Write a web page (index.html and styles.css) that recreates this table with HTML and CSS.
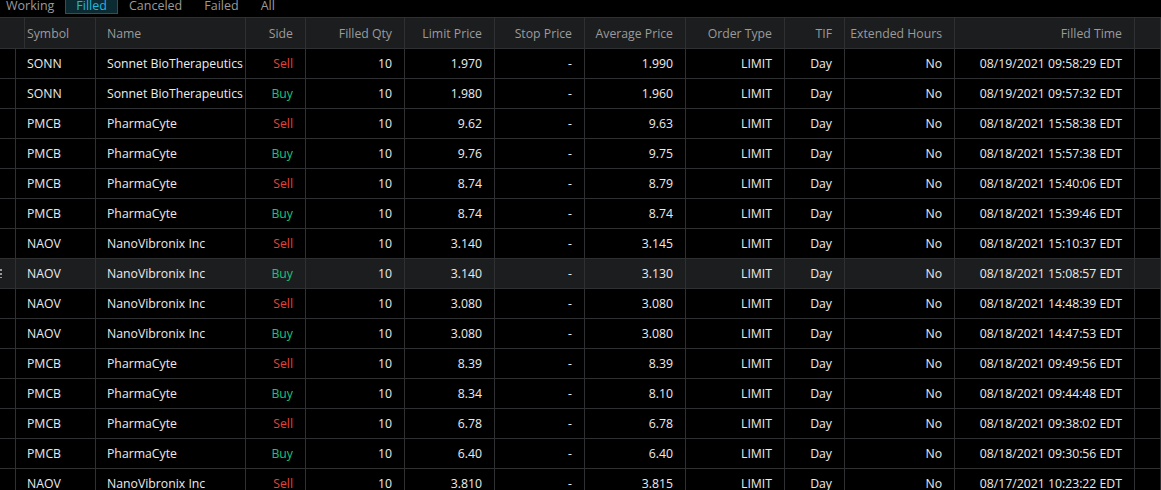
FILE: index.html
```html
<!DOCTYPE html>
<html>
<head>
<meta charset="utf-8">
<link rel="stylesheet" href="styles.css">
</head>
<body>
<div class="tabs">
  <div class="tab">Working</div>
  <div class="tab active">Filled</div>
  <div class="tab">Canceled</div>
  <div class="tab">Failed</div>
  <div class="tab">All</div>
</div>
<div class="grid" id="grid">
  <div class="row head">
    <div class="c"></div>
    <div class="c l">Symbol</div>
    <div class="c l">Name</div>
    <div class="c">Side</div>
    <div class="c">Filled Qty</div>
    <div class="c">Limit Price</div>
    <div class="c">Stop Price</div>
    <div class="c">Average Price</div>
    <div class="c">Order Type</div>
    <div class="c">TIF</div>
    <div class="c">Extended Hours</div>
    <div class="c">Filled Time</div>
    <div class="c"></div>
  </div>
</div>
<script src="app.js"></script>
</body>
</html>
```
FILE: styles.css
```css
html, body {
  margin: 0;
  padding: 0;
  background: #000;
  overflow: hidden;
}
body {
  font-family: "Open Sans", "Noto Sans", sans-serif;
  font-size: 12.25px;
  color: #ececec;
  width: 1161px;
  height: 490px;
}
.tabs {
  display: flex;
  height: 17px;
  align-items: flex-end;
  margin-left: -5px;
  overflow: visible;
}
.tab {
  box-sizing: border-box;
  height: 18px;
  margin-bottom: 3px;
  padding: 0 10px;
  border: 1px solid transparent;
  color: #9a9a9a;
  font-size: 12.5px;
  line-height: 17px;
}
.tab.active {
  background: #0b2a31;
  border-color: #1f5663;
  color: #1fb8e0;
}
.grid {
  border-top: 1px solid #2f3032;
}
.row {
  display: grid;
  grid-template-columns: 16px 80px 150px 60px 99px 90px 90px 101px 99px 60px 110px 180px 26px;
  height: 30px;
  box-sizing: border-box;
  border-bottom: 1px solid #2f3032;
}
.row.head {
  height: 31px;
  background: #1c1d1f;
  color: #9b9b9b;
}
.row.sel {
  background: #1c1d1f;
}
.c {
  box-sizing: border-box;
  border-right: 1px solid #2f3032;
  padding: 0 12px;
  display: flex;
  align-items: center;
  justify-content: flex-end;
  white-space: nowrap;
  overflow: hidden;
  position: relative;
}
.c.l {
  justify-content: flex-start;
  padding-left: 11px;
}
.c.first { padding: 0; }
.c.nm { padding-left: 11px; padding-right: 0; justify-content: flex-start; }
.sell { color: #e0443a; }
.buy { color: #16c47a; }
.handle {
  position: absolute;
  left: 0;
  top: 9px;
  width: 2px;
  height: 10px;
  background: radial-gradient(circle, #9a9a9a 0.8px, transparent 1px) 0 0 / 2px 4px;
}
```
FILE: app.js
```js
const data = [
  ["SONN","Sonnet BioTherapeutics","Sell","10","1.970","-","1.990","LIMIT","Day","No","08/19/2021 09:58:29 EDT"],
  ["SONN","Sonnet BioTherapeutics","Buy","10","1.980","-","1.960","LIMIT","Day","No","08/19/2021 09:57:32 EDT"],
  ["PMCB","PharmaCyte","Sell","10","9.62","-","9.63","LIMIT","Day","No","08/18/2021 15:58:38 EDT"],
  ["PMCB","PharmaCyte","Buy","10","9.76","-","9.75","LIMIT","Day","No","08/18/2021 15:57:38 EDT"],
  ["PMCB","PharmaCyte","Sell","10","8.74","-","8.79","LIMIT","Day","No","08/18/2021 15:40:06 EDT"],
  ["PMCB","PharmaCyte","Buy","10","8.74","-","8.74","LIMIT","Day","No","08/18/2021 15:39:46 EDT"],
  ["NAOV","NanoVibronix Inc","Sell","10","3.140","-","3.145","LIMIT","Day","No","08/18/2021 15:10:37 EDT"],
  ["NAOV","NanoVibronix Inc","Buy","10","3.140","-","3.130","LIMIT","Day","No","08/18/2021 15:08:57 EDT"],
  ["NAOV","NanoVibronix Inc","Sell","10","3.080","-","3.080","LIMIT","Day","No","08/18/2021 14:48:39 EDT"],
  ["NAOV","NanoVibronix Inc","Buy","10","3.080","-","3.080","LIMIT","Day","No","08/18/2021 14:47:53 EDT"],
  ["PMCB","PharmaCyte","Sell","10","8.39","-","8.39","LIMIT","Day","No","08/18/2021 09:49:56 EDT"],
  ["PMCB","PharmaCyte","Buy","10","8.34","-","8.10","LIMIT","Day","No","08/18/2021 09:44:48 EDT"],
  ["PMCB","PharmaCyte","Sell","10","6.78","-","6.78","LIMIT","Day","No","08/18/2021 09:38:02 EDT"],
  ["PMCB","PharmaCyte","Buy","10","6.40","-","6.40","LIMIT","Day","No","08/18/2021 09:30:56 EDT"],
  ["NAOV","NanoVibronix Inc","Sell","10","3.810","-","3.815","LIMIT","Day","No","08/17/2021 10:23:22 EDT"]
];
const grid = document.getElementById("grid");
data.forEach((r, i) => {
  const row = document.createElement("div");
  row.className = "row" + (i === 7 ? " sel" : "");
  let html = '<div class="c first">' + (i === 7 ? '<span class="handle"></span>' : '') + '</div>';
  r.forEach((v, j) => {
    let cls = "c";
    if (j === 0) cls += " l";
    if (j === 1) cls += " nm";
    let inner = v;
    if (j === 2) inner = '<span class="' + (v === "Sell" ? "sell" : "buy") + '">' + v + '</span>';
    html += '<div class="' + cls + '">' + inner + '</div>';
  });
  html += '<div class="c"></div>';
  row.innerHTML = html;
  grid.appendChild(row);
});
```
